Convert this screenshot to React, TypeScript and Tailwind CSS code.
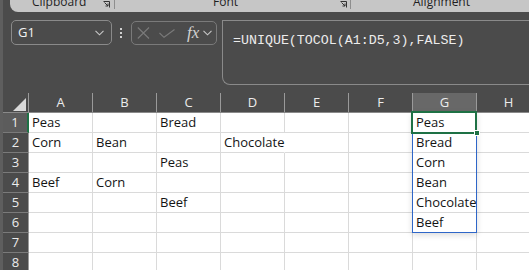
const COLS = ["A", "B", "C", "D", "E", "F", "G", "H"];

const DATA: Record<string, string> = {
  A1: "Peas",
  C1: "Bread",
  G1: "Peas",
  A2: "Corn",
  B2: "Bean",
  D2: "Chocolate",
  G2: "Bread",
  C3: "Peas",
  G3: "Corn",
  A4: "Beef",
  B4: "Corn",
  G4: "Bean",
  C5: "Beef",
  G5: "Chocolate",
  G6: "Beef",
};

const ROWS = [1, 2, 3, 4, 5, 6, 7, 8];

function Launcher() {
  return (
    <svg width="7" height="7" viewBox="0 0 7 7" className="shrink-0">
      <path d="M0.5 0.5 H6.5 V6.5" fill="none" stroke="#333" strokeWidth="1" />
      <path d="M1.5 1.5 L5 5 M2.5 5 H5 V2.5" fill="none" stroke="#333" strokeWidth="1" />
    </svg>
  );
}

function Chevron({ color = "#c8c8c8" }: { color?: string }) {
  return (
    <svg width="9" height="6" viewBox="0 0 9 6">
      <path d="M0.5 0.8 L4.5 4.8 L8.5 0.8" fill="none" stroke={color} strokeWidth="1.1" />
    </svg>
  );
}

export default function App() {
  return (
    <div
      className="w-[529px] h-[270px] overflow-hidden bg-[#4b4b4b] flex"
      style={{ fontFamily: '"Open Sans", "Noto Sans", sans-serif' }}
    >
      {/* left strip */}
      <div className="w-[3px] shrink-0 bg-[#5e5e5e]" />

      <div className="flex-1 flex flex-col min-w-0">
        {/* Ribbon bottom edge */}
        <div className="h-[12px] shrink-0 flex ml-[7px] bg-[#c6c6c6] rounded-bl-[8px] overflow-hidden text-[12px] text-[#1f1f1f]">
          <div className="w-[104px] shrink-0 flex items-start pl-[22px] pr-[4px]">
            <span className="leading-[12px] -mt-[4px]">Clipboard</span>
            <div className="ml-auto mt-[1px]">
              <Launcher />
            </div>
          </div>
          <div className="w-px h-[9px] bg-[#8e8e8e] shrink-0" />
          <div className="w-[235px] shrink-0 flex items-start pl-[98px] pr-[3px]">
            <span className="leading-[12px] -mt-[4px]">Font</span>
            <div className="ml-auto mt-[1px]">
              <Launcher />
            </div>
          </div>
          <div className="w-px h-[9px] bg-[#8e8e8e] shrink-0" />
          <div className="flex-1 flex items-start pl-[62px]">
            <span className="leading-[12px] -mt-[4px]">Alignment</span>
          </div>
        </div>

        {/* Name box + formula bar */}
        <div className="h-[81px] shrink-0 flex items-start pt-[8px]">
          <div className="ml-[8px] w-[101px] h-[25px] shrink-0 rounded-[5px] border border-[#8a8a8a] flex items-center pl-[6px] pr-[7px]">
            <span className="text-[13px] text-[#f2f2f2]">G1</span>
            <div className="ml-auto">
              <Chevron />
            </div>
          </div>
          <div className="ml-[8px] mt-[8px] flex flex-col gap-[2px] shrink-0">
            <div className="w-[2px] h-[2px] bg-[#d0d0d0]" />
            <div className="w-[2px] h-[2px] bg-[#d0d0d0]" />
            <div className="w-[2px] h-[2px] bg-[#d0d0d0]" />
          </div>
          <div className="ml-[9px] mt-[1px] w-[86px] h-[24px] shrink-0 rounded-[5px] border border-[#7a7a7a] flex items-center pl-[5px]">
            <svg width="13" height="12" viewBox="0 0 13 12">
              <path d="M0.8 0.5 L12 11.5 M12 0.5 L0.8 11.5" stroke="#7a7a7a" strokeWidth="1.1" fill="none" />
            </svg>
            <svg width="16" height="9" viewBox="0 0 16 9" className="ml-[9px]">
              <path d="M0.5 4 L5 8.3 L15.5 0.5" stroke="#7a7a7a" strokeWidth="1.1" fill="none" />
            </svg>
            <span
              className="ml-[12px] text-[17px] italic text-[#d2d2d2] leading-none -mt-[2px]"
              style={{ fontFamily: '"Liberation Serif", "DejaVu Serif", serif' }}
            >
              fx
            </span>
            <div className="ml-[4px]">
              <Chevron />
            </div>
          </div>
          <div className="ml-[5px] w-[320px] h-[65px] shrink-0 rounded-bl-[8px] border-l border-t border-b border-[#8a8a8a] pl-[10px] pt-[5px]">
            <span
              className="text-[13.3px] leading-[16px] text-[#ececec] whitespace-nowrap"
              style={{ fontFamily: '"Liberation Mono", "DejaVu Sans Mono", monospace' }}
            >
              =UNIQUE(TOCOL(A1:D5,3),FALSE)
            </span>
          </div>
        </div>

        {/* Grid */}
        <div className="relative flex-1 overflow-hidden">
          {/* column headers */}
          <div className="flex h-[20px] border-b border-[#8a8a8a]">
            <div className="w-[26px] shrink-0 relative border-r border-[#9a9a9a]">
              <svg width="13" height="13" viewBox="0 0 13 13" className="absolute left-[10px] top-[5px]">
                <path d="M13 0 L13 13 L0 13 Z" fill="#d9d9d9" />
              </svg>
            </div>
            {COLS.map((c) => (
              <div
                key={c}
                className={`w-[64px] shrink-0 flex items-center justify-center border-r border-[#9a9a9a] text-[13px] text-[#ececec] ${
                  c === "G" ? "bg-[#686868]" : ""
                }`}
              >
                {c}
              </div>
            ))}
          </div>

          {ROWS.map((r) => (
            <div key={r} className="flex h-[20px]">
              <div
                className={`w-[26px] shrink-0 flex items-center justify-center border-b border-[#7a7a7a] text-[13px] text-[#ececec] ${
                  r === 1 ? "bg-[#5c5c5c] border-r-2 border-r-[#1e7145]" : "border-r border-r-[#9a9a9a]"
                }`}
              >
                {r}
              </div>
              {COLS.map((c) => {
                const key = `${c}${r}`;
                const text = DATA[key];
                const overflow = key === "D2";
                return (
                  <div
                    key={key}
                    className={`w-[64px] shrink-0 bg-white border-b border-[#dadada] pl-[3px] text-[13px] leading-[19px] text-[#141414] whitespace-nowrap ${
                      overflow ? "border-r border-r-white relative z-10 overflow-visible" : "border-r border-r-[#dadada] overflow-hidden"
                    }`}
                  >
                    {text}
                  </div>
                );
              })}
            </div>
          ))}

          {/* spill range */}
          <div className="absolute left-[409px] top-[19px] w-[65px] h-[121px] border border-[#2e66c8] shadow-[0_2px_6px_rgba(0,0,0,0.15)] z-20" />
          {/* active cell */}
          <div className="absolute left-[408px] top-[18px] w-[66px] h-[23px] border-2 border-[#1e7145] z-30" />
          <div className="absolute left-[471px] top-[37px] w-[6px] h-[6px] bg-[#1e7145] border border-white z-40" />
        </div>
      </div>
    </div>
  );
}
